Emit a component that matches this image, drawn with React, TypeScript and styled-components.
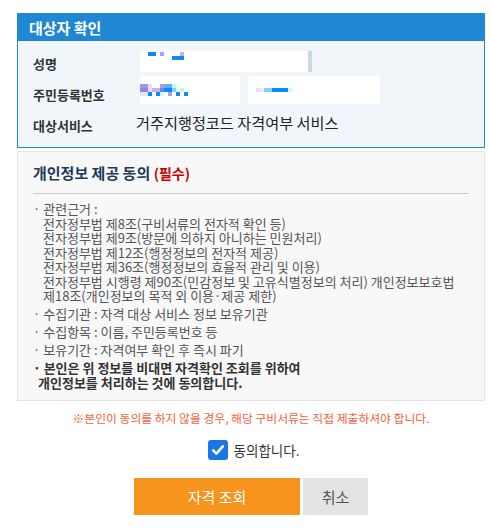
import React from "react";
import styled, { createGlobalStyle } from "styled-components";

const Global = createGlobalStyle`
  html, body { margin: 0; padding: 0; background: #ffffff; }
  body { font-family: "Noto Sans CJK KR", "Noto Sans", sans-serif; color: #333; }
  * { box-sizing: border-box; }
`;

const Page = styled.div`
  width: 468px;
  margin: 13px 0 0 17px;
  display: flex;
  flex-direction: column;
`;

const TargetBox = styled.section`
  border: 1px solid #1f87d3;
  background: #f1f6fa;
`;

const TargetHeader = styled.h2`
  margin: 0;
  height: 27px;
  line-height: 27px;
  padding-left: 11px;
  background: #1f87d3;
  color: #ffffff;
  font-size: 15px;
  font-weight: 700;
`;

const InfoGrid = styled.div`
  display: grid;
  grid-template-columns: 107px 1fr;
  grid-auto-rows: auto;
  row-gap: 4px;
  padding: 10px 0 13px 15px;
`;

const Label = styled.div<{ $offset?: number }>`
  font-size: 13px;
  line-height: 16px;
  font-weight: 700;
  color: #333;
  display: flex;
  align-items: center;
  padding-top: ${(p) => p.$offset ?? 5}px;
`;

const Value = styled.div<{ $top?: number }>`
  display: flex;
  gap: 8px;
  align-items: center;
  margin-top: ${(p) => p.$top ?? 0}px;
`;

const Field = styled.div<{ $w: number; $h: number; $bar?: boolean }>`
  position: relative;
  width: ${(p) => p.$w}px;
  height: ${(p) => p.$h}px;
  background: #ffffff;
  border-right: ${(p) => (p.$bar ? "4px solid #c6d9e3" : "none")};
`;

const Mosaic = styled.svg`
  position: absolute;
  left: 0;
  top: 0;
`;

const ServiceText = styled.div`
  font-size: 15.2px;
  line-height: 20px;
  color: #222;
  margin-left: -4px;
`;

const ConsentBox = styled.section`
  margin-top: 3px;
  border: 1px solid #e3e3e3;
  background: #f8f8f8;
  padding: 11px 15px 10px 15px;
`;

const ConsentTitle = styled.h3`
  margin: 0;
  font-size: 15px;
  line-height: 20px;
  font-weight: 700;
  color: #1c3a58;
`;

const Required = styled.span`
  font-size: 14px;
  line-height: 1;
  color: #cc0000;
`;

const Divider = styled.hr`
  margin: 10px 0 0 0;
  border: none;
  height: 1px;
  background: #cccccc;
`;

const List = styled.ul`
  list-style: none;
  margin: 8px 0 0 0;
  padding: 0;
  display: flex;
  flex-direction: column;
  gap: 3.5px;
`;

const Item = styled.li<{ $strong?: boolean }>`
  font-size: 13px;
  line-height: 14.5px;
  color: ${(p) => (p.$strong ? "#333" : "#555")};
  font-weight: ${(p) => (p.$strong ? 700 : 400)};
`;

const Sub = styled.div<{ $indent?: number }>`
  padding-left: ${(p) => p.$indent ?? 10}px;
`;

const Warning = styled.p`
  margin: 9px 0 0 0;
  text-align: center;
  font-size: 11.8px;
  line-height: 16px;
  color: #f1613d;
`;

const AgreeRow = styled.label`
  margin-top: 14px;
  display: flex;
  align-items: center;
  justify-content: center;
  gap: 6px;
  padding-left: 5px;
  font-size: 13.5px;
  line-height: 20px;
  color: #333;
`;

const CheckBox = styled.span`
  width: 20px;
  height: 20px;
  border-radius: 3px;
  background: #1a76e8;
  display: flex;
  align-items: center;
  justify-content: center;
`;

const Buttons = styled.div`
  margin-top: 18px;
  display: flex;
  justify-content: center;
  gap: 3px;
`;

const Button = styled.button<{ $primary?: boolean }>`
  height: 37px;
  width: ${(p) => (p.$primary ? 166 : 65)}px;
  border: none;
  border-radius: 0;
  background: ${(p) => (p.$primary ? "#f7941e" : "#e3e3e3")};
  color: ${(p) => (p.$primary ? "#ffffff" : "#555555")};
  font-family: "Noto Sans CJK KR", sans-serif;
  font-size: 15px;
  padding: 0;
`;

type Block = [number, number, number, string];

const nameBlocks: Block[] = [
  [8, 1, 8, "#0a8cf0"],
  [20, 1, 4, "#a99df0"],
  [40, 1, 4, "#c4b0f0"],
  [32, 5, 12, "#0a8cf0"],
  [20, 9, 4, "#fbfde8"],
];

const rrn1Blocks: Block[] = [
  [0, 8, 8, "#a196ea"],
  [8, 8, 4, "#f7d6f2"],
  [20, 8, 4, "#a99df0"],
  [24, 8, 4, "#6ea8f0"],
  [28, 8, 4, "#58b4f4"],
  [32, 8, 4, "#cdf4fb"],
  [36, 8, 4, "#e6fafd"],
  [0, 12, 8, "#8f86e6"],
  [8, 12, 4, "#f3d8f3"],
  [12, 12, 8, "#c6b2f0"],
  [20, 12, 4, "#6a86ec"],
  [24, 12, 8, "#0a8cf0"],
  [32, 12, 4, "#8ad0f8"],
  [40, 12, 4, "#c4f0fb"],
  [0, 16, 8, "#f4def6"],
  [8, 16, 4, "#0a8cf0"],
  [16, 16, 4, "#0a8cf0"],
  [20, 16, 4, "#d8f4fc"],
  [28, 16, 4, "#a99df0"],
  [36, 16, 4, "#0a8cf0"],
  [44, 16, 4, "#0a8cf0"],
];

const rrn2Blocks: Block[] = [
  [8, 12, 4, "#fad4f0"],
  [12, 12, 4, "#d6f8fc"],
  [16, 12, 8, "#88ccf8"],
  [24, 12, 16, "#0a8cf0"],
  [40, 12, 4, "#ccfaff"],
];

const Pixels: React.FC<{ blocks: Block[]; w: number; h: number }> = ({ blocks, w, h }) => (
  <Mosaic width={w} height={h}>
    {blocks.map(([x, y, bw, c], i) => (
      <rect key={i} x={x} y={y} width={bw} height={4} fill={c} />
    ))}
  </Mosaic>
);

const laws = [
  "전자정부법 제8조(구비서류의 전자적 확인 등)",
  "전자정부법 제9조(방문에 의하지 아니하는 민원처리)",
  "전자정부법 제12조(행정정보의 전자적 제공)",
  "전자정부법 제36조(행정정보의 효율적 관리 및 이용)",
  "전자정부법 시행령 제90조(민감정보 및 고유식별정보의 처리) 개인정보보호법 제18조(개인정보의 목적 외 이용·제공 제한)",
];

export default function App() {
  return (
    <>
      <Global />
      <Page>
        <TargetBox>
          <TargetHeader>대상자 확인</TargetHeader>
          <InfoGrid>
            <Label $offset={4}>성명</Label>
            <Value>
              <Field $w={172} $h={21} $bar>
                <Pixels blocks={nameBlocks} w={60} h={14} />
              </Field>
            </Value>
            <Label $offset={9}>주민등록번호</Label>
            <Value>
              <Field $w={100} $h={28}>
                <Pixels blocks={rrn1Blocks} w={60} h={22} />
              </Field>
              <Field $w={132} $h={28}>
                <Pixels blocks={rrn2Blocks} w={60} h={22} />
              </Field>
            </Value>
            <Label $offset={10}>대상서비스</Label>
            <Value $top={1}>
              <ServiceText>거주지행정코드 자격여부 서비스</ServiceText>
            </Value>
          </InfoGrid>
        </TargetBox>

        <ConsentBox>
          <ConsentTitle>
            개인정보 제공 동의 <Required>(필수)</Required>
          </ConsentTitle>
          <Divider />
          <List>
            <Item>
              · 관련근거 :
              {laws.map((l) => (
                <Sub key={l}>{l}</Sub>
              ))}
            </Item>
            <Item>· 수집기관 : 자격 대상 서비스 정보 보유기관</Item>
            <Item>· 수집항목 : 이름, 주민등록번호 등</Item>
            <Item>· 보유기간 : 자격여부 확인 후 즉시 파기</Item>
            <Item $strong>
              · 본인은 위 정보를 비대면 자격확인 조회를 위하여
              <Sub $indent={5}>개인정보를 처리하는 것에 동의합니다.</Sub>
            </Item>
          </List>
        </ConsentBox>

        <Warning>※본인이 동의를 하지 않을 경우, 해당 구비서류는 직접 제출하셔야 합니다.</Warning>

        <AgreeRow>
          <CheckBox>
            <svg width="14" height="14" viewBox="0 0 14 14">
              <path d="M2.2 7.4 L5.4 10.6 L11.8 3.4" fill="none" stroke="#fff" strokeWidth="2.6" strokeLinecap="round" strokeLinejoin="round" />
            </svg>
          </CheckBox>
          동의합니다.
        </AgreeRow>

        <Buttons>
          <Button $primary>자격 조회</Button>
          <Button>취소</Button>
        </Buttons>
      </Page>
    </>
  );
}
